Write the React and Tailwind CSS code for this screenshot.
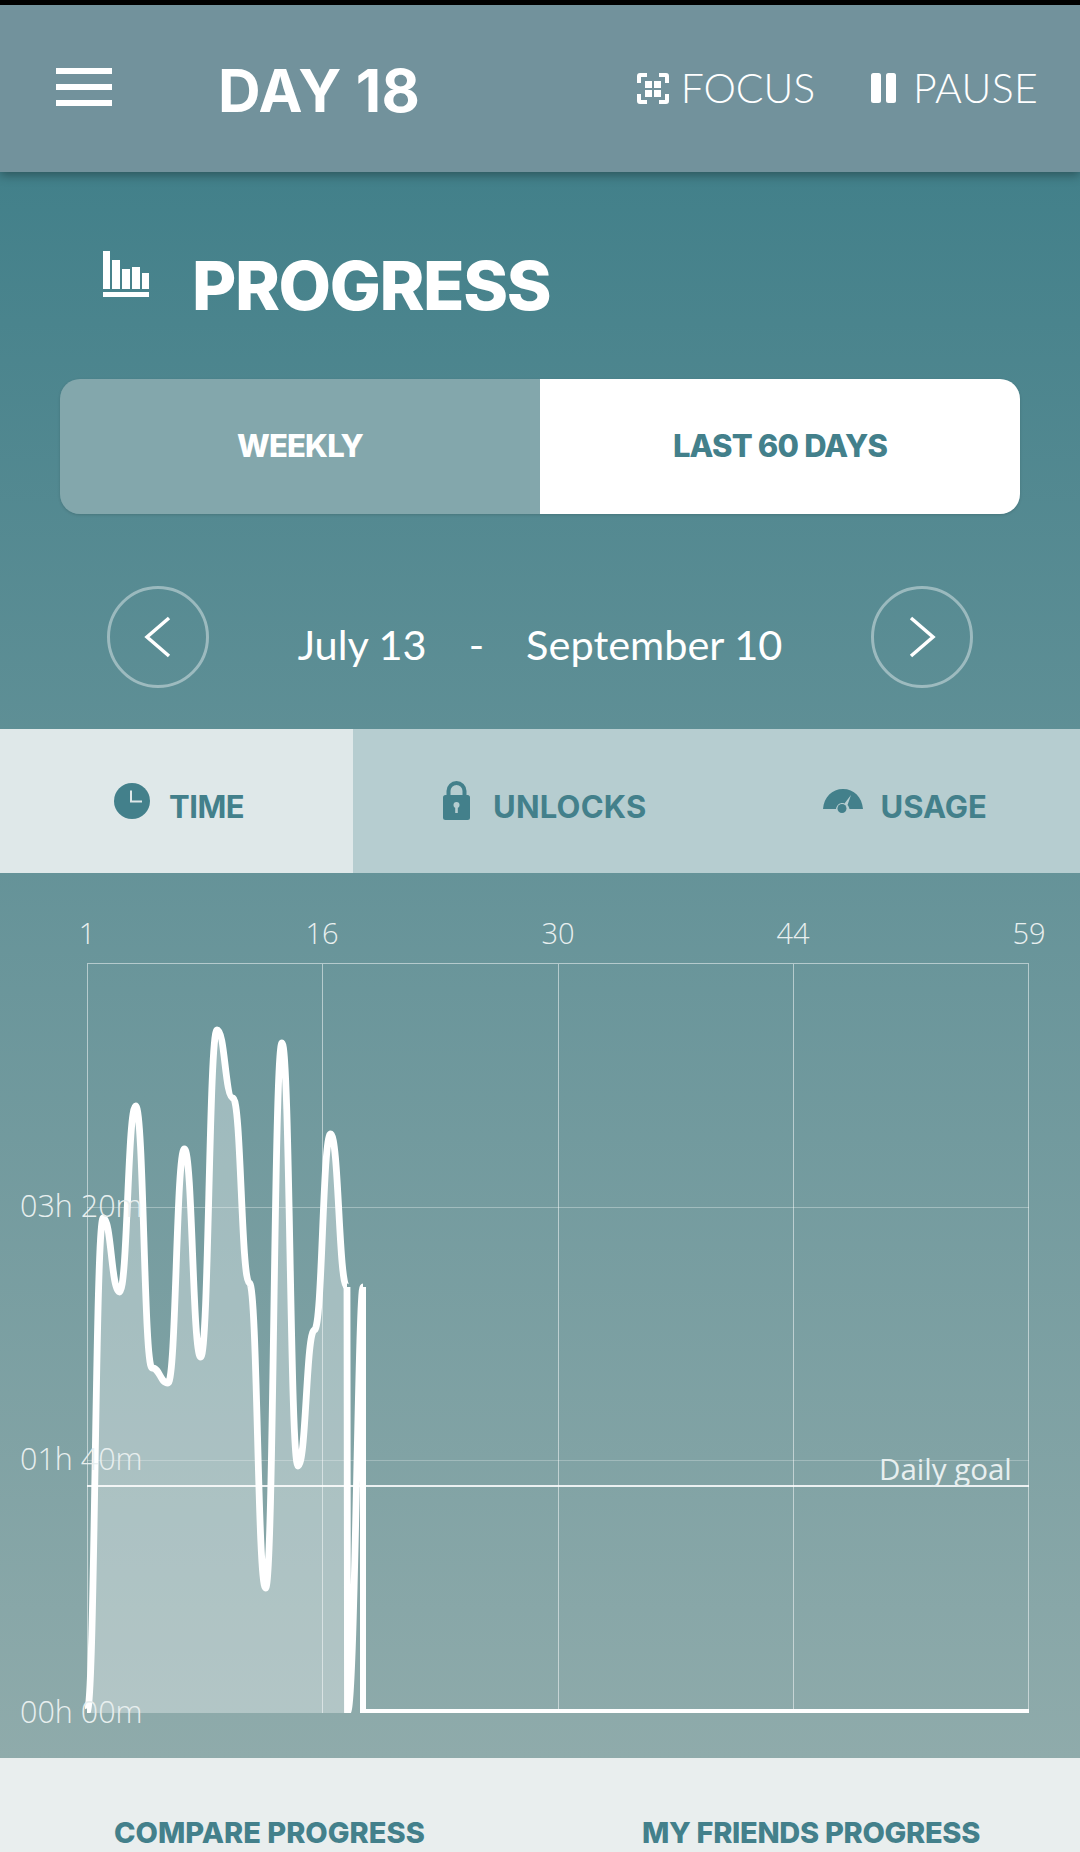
import React from 'react';

// day values of the time chart, already in page coordinates
const points = [
  [87, 1712], [103.2, 1218], [119.5, 1292], [135.7, 1106], [152, 1368], [168, 1383],
  [184.4, 1149], [200.7, 1357], [217, 1030], [233, 1098], [249.4, 1283], [265.6, 1588],
  [282, 1043], [298, 1466], [314.4, 1330], [330.6, 1134], [347, 1287],
];

// flat tangent at every day, that is what gives the little shoulders on the way down
function curvePath(pts) {
  let d = `M${pts[0][0]} ${pts[0][1]}`;
  for (let i = 0; i < pts.length - 1; i++) {
    const h = (pts[i + 1][0] - pts[i][0]) / 2;
    d += ` C${pts[i][0] + h} ${pts[i][1]} ${pts[i + 1][0] - h} ${pts[i + 1][1]} ${pts[i + 1][0]} ${pts[i + 1][1]}`;
  }
  return d;
}

function TimeChart() {
  const line = curvePath(points);
  return (
    <svg className="absolute inset-0" width="1080" height="885" viewBox="0 873 1080 885">
      <defs>
        <clipPath id="plot">
          <rect x="85" y="963" width="945" height="750" />
        </clipPath>
      </defs>
      <g stroke="#ffffff" strokeWidth="1" shapeRendering="crispEdges">
        <path strokeOpacity="0.5" d="M87.5 963V1713M322.5 963V1713M558.5 963V1713M793.5 963V1713M1028.5 963V1713M87 963.5H1029" />
        <path strokeOpacity="0.32" d="M87 1207.5H1029" />
        <path strokeOpacity="0.25" d="M87 1460.5H1029" />
      </g>
      <g clipPath="url(#plot)">
        <path d={`${line} L347 1713 L87 1713 Z`} fill="#ffffff" fillOpacity="0.33" />
        <path d="M87 1486H1029" stroke="#ffffff" strokeOpacity="0.85" strokeWidth="2" />
        <path d={line} fill="none" stroke="#ffffff" strokeWidth="6.8" strokeLinejoin="round" />
        <path
          d="M347 1287 L347.5 1712 C355 1712 358 1287 363 1287"
          fill="none"
          stroke="#ffffff"
          strokeWidth="6.8"
          strokeLinejoin="round"
        />
        <path d="M363 1287 L363 1712 L1029 1712" fill="none" stroke="#ffffff" strokeWidth="6" strokeLinejoin="miter" />
      </g>
    </svg>
  );
}

function FocusIcon() {
  return (
    <svg width="32" height="31" viewBox="0 0 32 31" fill="#ffffff">
      <path d="M3 0H10V4H4V10H0V3Q0 0 3 0Z" />
      <path d="M22 0H29Q32 0 32 3V10H28V4H22Z" />
      <path d="M0 21H4V27H10V31H3Q0 31 0 28Z" />
      <path d="M28 21H32V28Q32 31 29 31H22V27H28Z" />
      <rect x="8" y="8" width="7" height="7" />
      <rect x="17" y="8" width="7" height="7" />
      <rect x="8" y="17" width="7" height="7" />
      <rect x="17" y="17" width="7" height="7" />
    </svg>
  );
}

function PauseIcon() {
  return (
    <svg width="25" height="30" viewBox="0 0 25 30" fill="#ffffff">
      <rect x="0" y="0" width="10" height="30" rx="2.5" />
      <rect x="15" y="0" width="10" height="30" rx="2.5" />
    </svg>
  );
}

function ProgressIcon() {
  return (
    <svg width="46" height="46" viewBox="0 0 46 46" fill="#ffffff">
      <rect x="0" y="0" width="7" height="38" />
      <rect x="9" y="9" width="8" height="29" />
      <rect x="19" y="18" width="8" height="20" />
      <rect x="29" y="16" width="8" height="22" />
      <rect x="39" y="22" width="7" height="16" />
      <rect x="0" y="41" width="46" height="5" />
    </svg>
  );
}

function ClockIcon() {
  return (
    <svg width="36" height="36" viewBox="0 0 36 36">
      <circle cx="18" cy="18" r="18" fill="#43808b" />
      <path d="M17 7.5V18.5H28" fill="none" stroke="#dfe8e9" strokeWidth="2" />
    </svg>
  );
}

function LockIcon() {
  return (
    <svg width="27" height="39" viewBox="0 0 27 39">
      <path d="M5.5 16V10a8 8 0 0 1 16 0V16" fill="none" stroke="#43808b" strokeWidth="4" />
      <rect x="0" y="14" width="27" height="25" rx="2.5" fill="#43808b" />
      <circle cx="13.5" cy="24" r="3" fill="#b6cdd0" />
      <rect x="12.2" y="25" width="2.6" height="7" fill="#b6cdd0" />
    </svg>
  );
}

function GaugeIcon() {
  return (
    <svg width="40" height="24" viewBox="0 0 40 24">
      <path d="M0 20C1 8 9 0 20 0S39 8 40 20H26.5C26 18 25.5 17 24.5 16L28 6L21.5 14.5C18 13 14 15 13 20Z" fill="#43808b" />
      <circle cx="19" cy="19.5" r="4.5" fill="#43808b" />
    </svg>
  );
}

export default function App() {
  return (
    <div className="w-[1080px] h-[1852px] flex flex-col overflow-hidden font-['Lato',sans-serif]">
      <div className="h-[5px] bg-black" />

      {/* Top bar */}
      <header className="relative z-10 h-[167px] bg-[#72929c] shadow-[0_3px_10px_rgba(0,0,0,0.35)] flex items-start pt-[56px] text-white">
        <div className="ml-[56px] mt-[7px] w-[56px] h-[38px] flex flex-col justify-between">
          <div className="h-[6px] bg-white" />
          <div className="h-[6px] bg-white" />
          <div className="h-[6px] bg-white" />
        </div>
        <h1 className="ml-[106px] h-[60px] leading-[60px] text-[59px] font-bold font-['Inter',sans-serif] tracking-[0.3px]">DAY 18</h1>
        <div className="ml-auto mr-[42px] flex items-center h-[38px] mt-[8px] text-[41px] font-light">
          <FocusIcon />
          <span className="ml-[12px] tracking-[-0.1px]">FOCUS</span>
          <span className="ml-[56px]"><PauseIcon /></span>
          <span className="ml-[17px] tracking-[0.3px]">PAUSE</span>
        </div>
      </header>

      <main className="h-[1586px] flex flex-col bg-linear-to-b from-[#42808a] to-[#8fabab]">
        {/* Title */}
        <div className="h-[207px] flex items-start pl-[103px] pt-[79px] text-white">
          <ProgressIcon />
          <h2 className="ml-[43px] mt-[-1px] leading-[70px] text-[68px] font-extrabold font-['Inter',sans-serif] tracking-[-1.4px]">PROGRESS</h2>
        </div>

        {/* Range switch */}
        <div className="mx-[60px] h-[135px] flex rounded-[20px] overflow-hidden shadow-[0_1px_3px_rgba(0,0,0,0.15)] text-[31px] font-extrabold font-['Inter',sans-serif] tracking-[-0.8px]">
          <div className="w-[480px] flex items-center justify-center bg-[#83a7ac] text-white">WEEKLY</div>
          <div className="w-[480px] flex items-center justify-center bg-white text-[#43808b]">LAST 60 DAYS</div>
        </div>

        {/* Date range */}
        <div className="h-[215px] pt-[72px] px-[107px] flex items-start justify-between text-white">
          <button className="w-[102px] h-[102px] rounded-full border-[3px] border-white/40 flex items-center justify-center">
            <svg width="28" height="42" viewBox="0 0 28 42" fill="none" stroke="#ffffff" strokeWidth="3.5">
              <path d="M25 2L3 21L25 40" />
            </svg>
          </button>
          <div className="mt-[26px] flex text-[41.5px] leading-[64px]">
            <span>July 13</span>
            <span className="ml-[42px]">-</span>
            <span className="ml-[42px]">September 10</span>
          </div>
          <button className="w-[102px] h-[102px] rounded-full border-[3px] border-white/40 flex items-center justify-center">
            <svg width="28" height="42" viewBox="0 0 28 42" fill="none" stroke="#ffffff" strokeWidth="3.5">
              <path d="M3 2L25 21L3 40" />
            </svg>
          </button>
        </div>

        {/* Metric tabs */}
        <div className="h-[144px] flex bg-[#b6cdd0] text-[#43808b] text-[31px] font-bold font-['Inter',sans-serif]">
          <div className="w-[353px] pl-[114px] flex items-start pt-[54px] bg-[#dfe8e9]">
            <ClockIcon />
            <span className="ml-[19px] mt-[4px] leading-[40px] tracking-[-0.5px]">TIME</span>
          </div>
          <div className="pl-[90px] flex items-start pt-[52px]">
            <LockIcon />
            <span className="ml-[23px] mt-[6px] leading-[40px] tracking-[0.2px]">UNLOCKS</span>
          </div>
          <div className="ml-[177px] flex items-start pt-[60px]">
            <GaugeIcon />
            <span className="ml-[17px] mt-[-2px] leading-[40px]">USAGE</span>
          </div>
        </div>

        {/* Chart */}
        <div className="relative flex-1 text-[#e8efef] text-[29px] font-light font-['Open_Sans',sans-serif]">
          <TimeChart />
          <span className="absolute left-[67px] w-[40px] top-[40px] text-center leading-[40px]">1</span>
          <span className="absolute left-[292px] w-[60px] top-[40px] text-center leading-[40px]">16</span>
          <span className="absolute left-[528px] w-[60px] top-[40px] text-center leading-[40px]">30</span>
          <span className="absolute left-[763px] w-[60px] top-[40px] text-center leading-[40px]">44</span>
          <span className="absolute left-[999px] w-[60px] top-[40px] text-center leading-[40px]">59</span>
          <span className="absolute left-[20px] top-[312px] leading-[40px] text-[30.5px]">03h 20m</span>
          <span className="absolute left-[20px] top-[565px] leading-[40px] text-[30.5px]">01h 40m</span>
          <span className="absolute left-[20px] top-[818px] leading-[40px] text-[30.5px]">00h 00m</span>
          <span className="absolute left-[879px] top-[576px] leading-[40px] font-normal text-[29.5px]">Daily goal</span>
        </div>
      </main>

      {/* Footer links */}
      <footer className="h-[94px] bg-[#e9eeee] text-[#43808b] text-[29px] font-extrabold font-['Inter',sans-serif] flex items-start pt-[55px] overflow-hidden">
        <span className="ml-[114px] leading-[40px]">COMPARE PROGRESS</span>
        <span className="ml-auto mr-[100px] leading-[40px] tracking-[-0.3px]">MY FRIENDS PROGRESS</span>
      </footer>
    </div>
  );
}
